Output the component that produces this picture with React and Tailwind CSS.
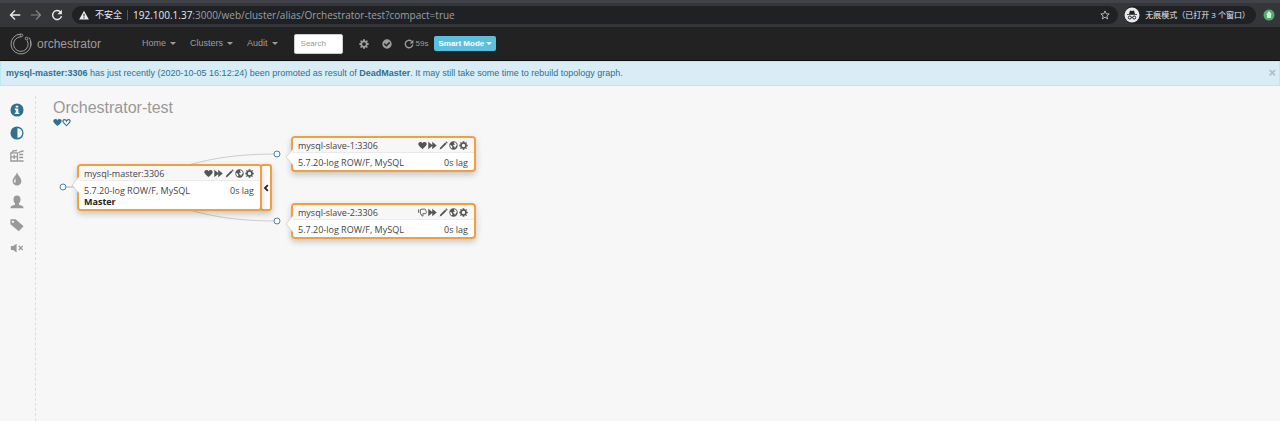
import React from "react";

const PATHS = {
  heart: "M8 14.500 C7 13 0.500 9.500 0.500 5.500 C0.500 3.300 2.300 1.800 4.300 1.800 C6 1.800 7.400 2.700 8 4 C8.600 2.700 10 1.800 11.700 1.800 C13.700 1.800 15.500 3.300 15.500 5.500 C15.500 9.500 9 13 8 14.500Z",
  forward: "M0.500 1.500 L7.500 7 V1.500 L15.500 8 L7.500 14.500 V9 L0.500 14.500Z",
  pencil: "M13 0.500 L15.500 3 L14.200 4.300 L11.700 1.800Z M11 2.500 L13.500 5 L4.500 13.700 L1 15 L2.300 11.500Z",
  gear: "M6.500 0.500 H9.500 L9.900 2.600 L11.100 3.100 L12.900 1.900 L14.300 3.300 L13 5.100 L13.500 6.300 L15.500 6.600 V9.400 L13.500 9.700 L12.900 11 L14.100 12.700 L12.700 14.200 L10.900 13 L9.800 13.500 L9.500 15.500 H6.500 L6.200 13.500 L5 13 L3.300 14.200 L1.800 12.700 L3 10.900 L2.500 9.700 L0.500 9.400 V6.600 L2.500 6.300 L3 5 L1.800 3.300 L3.300 1.800 L5 3 L6.200 2.500Z M8 5 A3 3 0 1 0 8 11 A3 3 0 1 0 8 5Z",
  globe: "M8 0.500 A7.500 7.500 0 1 0 8 15.500 A7.500 7.500 0 1 0 8 0.500Z M9 2 C12 2.300 14 4.800 14 7.500 L12.500 9 L10.800 12.600 L9.300 10 L7.200 8.600 L8.500 6.500 L11 6 L9 4.500Z M2.200 6.500 L4.500 8 L6 10.500 L5.500 13.300 C3 12.300 1.600 9.500 2.200 6.500Z",
  check: "M8 0.500 A7.500 7.500 0 1 0 8 15.500 A7.500 7.500 0 1 0 8 0.500Z M4.500 6.500 L7 9 L11.500 4.500 L13.200 6.200 L7 12.300 L2.900 8.200Z",
  info: "M8 0.500 A7.500 7.500 0 1 0 8 15.500 A7.500 7.500 0 1 0 8 0.500Z M6.500 3 H9.500 V5 H6.500Z M5.500 6.300 H9.500 V11 H10.600 V12.700 H5.400 V11 H6.600 V8 H5.500Z",
  adjust: "M8 0.500 A7.500 7.500 0 1 0 8 15.500 A7.500 7.500 0 1 0 8 0.500Z M8.500 2.500 A5.500 5.500 0 0 1 8.500 13.500Z",
  tint: "M8 0.500 C9 4 13 6.800 13 10.500 A5 5 0 0 1 3 10.500 C3 6.800 7 4 8 0.500Z M6.600 6.800 C5 8.500 4.200 10 4.800 11.500 C5.200 12.700 6.400 12.800 6.500 11.500 C6.500 10 5.800 9 6.600 6.800Z",
  user: "M8 0.500 C10.700 0.500 12 2.300 12 5 C12 7 11.300 8.400 10.200 9.600 C10 10.800 10.500 11.200 12 11.800 C14.400 12.600 15.500 13 15.500 15.200 H0.500 C0.500 13 1.600 12.600 4 11.800 C5.500 11.200 6 10.800 5.800 9.600 C4.700 8.400 4 7 4 5 C4 2.300 5.300 0.500 8 0.500Z",
  tag: "M0.500 1.500 H6.500 L15.500 9.500 L10 15.200 L0.500 7Z M3.400 3 A1.300 1.300 0 1 0 3.400 5.600 A1.300 1.300 0 1 0 3.400 3Z",
  mute: "M1 5.700 H3.500 L7.500 3 V13 L3.500 10.300 H1Z M9.500 6 L10.600 5 L12.300 6.800 L14 5 L15 6 L13.300 7.900 L15 9.800 L14 10.800 L12.300 9 L10.600 10.800 L9.500 9.800 L11.200 7.900Z",
  left: "M10.500 1 L13 3.500 L8.500 8 L13 12.500 L10.500 15 L3.500 8Z",
  warn: "M8 1 L15.800 15 H0.200Z M7.200 6 V10.500 H8.800 V6Z M7.200 11.700 V13.400 H8.800 V11.700Z",
};

function Icon({ name, className }) {
  return (
    <svg viewBox="0 0 16 16" className={className} fill="currentColor" fillRule="evenodd" aria-hidden="true">
      <path d={PATHS[name]} />
    </svg>
  );
}

function LineIcon({ d, width = 1.6, className }) {
  return (
    <svg viewBox="0 0 16 16" className={className} fill="none" stroke="currentColor" strokeWidth={width} aria-hidden="true">
      <path d={d} />
    </svg>
  );
}

const HEART = "M8 13.500 C7 12 1.500 9 1.500 5.500 C1.500 3.800 3 2.800 4.500 2.800 C6.300 2.800 7.500 4 8 5.500 C8.500 4 9.700 2.800 11.500 2.800 C13 2.800 14.500 3.800 14.500 5.500 C14.500 9 9 12 8 13.500Z";
const THUMB_DOWN = "M1 2.500 V8.500 M4 3 V9 L7.500 14.500 C9.500 14.500 9 12.500 8.500 10 H13.500 C15.500 9 15 7.500 14.500 7 C15 5.500 14.500 5 13.800 4.500 C14 3 13 2 12 2 H7 L4 3Z";
const SERVER = "M2.500 4 C2.500 2 4 1.700 8 1.700 M1 4.500 H8.500 V13.700 H1Z M1 9 H8.500 M4.800 6.500 V11.500 M9.500 4 C11.500 4 11.500 2.300 15.500 2.300 M10.500 6.300 H15 M10.500 9.700 H15 M9.500 13.700 H15.500";

function Caret() {
  return <span className="border-x-[3px] border-t-[3px] border-x-transparent border-t-current" />;
}

function BrowserBar() {
  return (
    <div className="flex h-[27px] items-center border-t-[3px] border-[#41424a] bg-[#35363a] pl-[9px] text-[10px] text-[#e8eaed]">
      <div className="flex items-center gap-[9px]">
        <button aria-label="Back"><LineIcon className="size-3" width={1.8} d="M15 8 H2 M8 2 L2 8 L8 14" /></button>
        <button aria-label="Forward" className="text-[#85868a]"><LineIcon className="size-3" width={1.6} d="M1 8 H14 M8 2 L14 8 L8 14" /></button>
        <button aria-label="Reload">
          <svg viewBox="0 0 16 16" className="size-3" fill="none" stroke="currentColor" strokeWidth="1.900" aria-hidden="true">
            <path d="M13 4.500 A6 6 0 1 0 14 9.500" />
            <path d="M14.500 1 V7 H8.500Z" fill="currentColor" stroke="none" />
          </svg>
        </button>
      </div>
      <div className="ml-[9px] flex h-[18px] min-w-0 flex-1 items-center rounded-full bg-[#202124] pr-2 pl-[7px]">
        <Icon name="warn" className="size-[10px] shrink-0" />
        <span className="ml-[6px] shrink-0 text-[9px]">不安全</span>
        <span className="mx-[5px] h-[10px] w-px bg-[#55565a]" />
        <span className="flex-1 truncate text-[#9aa0a6]"><span className="text-[#e8eaed]">192.100.1.37</span>:3000/web/cluster/alias/Orchestrator-test?compact=true</span>
        <button aria-label="Bookmark">
          <LineIcon className="size-[10px] text-[#c5c7ca]" width={1.4} d="M8 1.500 L9.900 6 L14.700 6.300 L11 9.500 L12.200 14.200 L8 11.600 L3.800 14.200 L5 9.500 L1.300 6.300 L6.100 6Z" />
        </button>
      </div>
      <div className="ml-[6px] flex h-[18px] items-center gap-[5px] rounded-full bg-[#202124] pr-[6px] text-[8px]">
        <svg viewBox="0 0 16 16" className="size-4" aria-hidden="true">
          <circle cx="8" cy="8" r="7.500" fill="#e8eaed" />
          <path d="M5 7 L6 3.500 L8 4 L10 3.500 L11 7Z M3 7.200 H13 V8 H3Z" fill="#202124" />
          <g fill="none" stroke="#202124"><circle cx="5.800" cy="10.500" r="1.500" /><circle cx="10.200" cy="10.500" r="1.500" /><path d="M7.300 10.300 H8.700" /></g>
        </svg>
        <span>无痕模式（已打开 3 个窗口）</span>
      </div>
      <svg viewBox="0 0 12 12" className="mr-[5px] ml-[7px] size-3" aria-hidden="true">
        <circle cx="6" cy="6" r="5.500" fill="#4fae6e" />
        <path d="M6 2 L9 5.500 H8 V9 H4 V5.500 H3Z" fill="#d8f0df" />
      </svg>
    </div>
  );
}

function NavBar() {
  return (
    <nav className="flex h-[34px] items-center border-b border-[#101010] bg-[#222] text-[9px] text-[#9d9d9d]">
      <a href="#home" className="ml-[9px] flex w-[133px] items-center gap-1 text-[12px]">
        <svg viewBox="0 0 24 24" className="size-6" fill="none" stroke="#9d9d9d" aria-hidden="true">
          <path d="M12 2 A10 10 0 1 0 21.500 9" />
          <path d="M12 4.800 A7.300 7.300 0 1 0 18.200 8.500" />
          <path d="M20 5.500 C22 8 22.500 12 21.500 15" />
          <circle cx="12.500" cy="3.400" r="1.300" /><circle cx="17.500" cy="6.500" r="1.300" />
        </svg>
        orchestrator
      </a>
      <div className="flex items-center gap-[14px]">
        {["Home", "Clusters", "Audit"].map((label) => (
          <button key={label} className="flex items-center gap-1">{label}<Caret /></button>
        ))}
      </div>
      <input aria-label="Search" placeholder="Search" className="ml-4 h-5 w-[49px] rounded-[2px] border border-[#ccc] bg-white px-[6px] text-[8px] placeholder:text-[#999]" />
      <button aria-label="Settings" className="ml-4"><Icon name="gear" className="size-[10px]" /></button>
      <button aria-label="Status" className="ml-[13px]"><Icon name="check" className="size-[10px]" /></button>
      <button className="ml-[12px] flex items-center gap-[2px] text-[8px]">
        <svg viewBox="0 0 16 16" className="size-[10px]" fill="none" stroke="currentColor" strokeWidth="2.200" aria-hidden="true">
          <path d="M12 3.500 A6 6 0 1 0 14 9" /><path d="M15 1 V7 H9Z" fill="currentColor" stroke="none" />
        </svg>
        59s
      </button>
      <button className="ml-[6px] flex h-[15px] items-center gap-[2px] rounded-[2px] bg-[#5bc0de] px-1 text-[8px] font-bold text-white">Smart Mode<Caret /></button>
    </nav>
  );
}

function Alert() {
  return (
    <div role="alert" className="flex h-[25px] items-center border border-[#bce8f1] bg-[#d9edf7] pr-[3px] pl-[5px] text-[9px] text-[#31708f]">
      <p className="flex-1"><b>mysql-master:3306</b> has just recently (2020-10-05 16:12:24) been promoted as result of <b>DeadMaster</b>. It may still take some time to rebuild topology graph.</p>
      <button aria-label="Close" className="pb-[2px] text-[13px] leading-none font-bold text-[#adbec6]">×</button>
    </div>
  );
}

function Sidebar() {
  const items = ["info", "adjust", "compressed", "tint", "user", "tag", "mute"];
  return (
    <aside className="mt-[10px] flex w-9 shrink-0 flex-col items-center gap-[9px] border-r border-dashed border-[#ddd] pt-[7px] pr-px text-[#999]">
      {items.map((name) => (
        <button key={name} aria-label={name} className={name === "info" || name === "adjust" ? "text-[#31708f]" : ""}>
          {name === "compressed" ? (
            <LineIcon className="size-[14px]" width={1.5} d={SERVER} />
          ) : (
            <Icon name={name} className="size-[14px]" />
          )}
        </button>
      ))}
    </aside>
  );
}

function Node({ title, down, master, className }) {
  return (
    <article className={"absolute flex " + className}>
      <div className="relative w-[185px] rounded-[4px] border-2 border-[#f0a040] bg-white text-[9px] leading-[11px] text-[#444] shadow-[0_3px_6px_rgba(0,0,0,0.2)]">
        <svg viewBox="0 0 8 16" className="absolute top-[11px] -left-2 h-4 w-2" aria-hidden="true">
          <path d="M8 0 L1 8 L8 16Z" fill="#fff" /><path d="M8 0 L1 8 L8 16" fill="none" stroke="#d5d5d5" />
        </svg>
        <header className="flex h-[15px] items-center justify-between rounded-t-[3px] border-b border-[#ebebeb] bg-[#f7f7f7] pr-[6px] pl-[5px]">
          <h2>{title}</h2>
          <div className="flex items-center gap-px text-[#555]">
            {down ? <LineIcon d={THUMB_DOWN} className="size-[9px]" /> : <Icon name="heart" className="size-[9px]" />}
            <Icon name="forward" className="mr-px size-[9px]" />
            {["pencil", "globe", "gear"].map((name) => <Icon key={name} name={name} className="size-[9px]" />)}
          </div>
        </header>
        <div className="pt-1 pr-[6px] pb-[2px] pl-[5px]">
          <p className="flex justify-between"><span>5.7.20-log ROW/F, MySQL</span><span>0s lag</span></p>
          {master && <p className="font-bold text-[#222]">Master</p>}
        </div>
      </div>
      {master && (
        <button aria-label="Collapse" className="-ml-[2px] flex w-3 items-center justify-center rounded-[3px] border-2 border-[#f0a040] bg-white text-[#222] shadow-[0_3px_6px_rgba(0,0,0,0.2)]">
          <Icon name="left" className="size-2 shrink-0" />
        </button>
      )}
    </article>
  );
}

export default function App() {
  return (
    <div className="flex min-h-screen flex-col bg-[#f7f7f7] font-['Liberation_Sans',Arial,sans-serif]">
      <div className="font-['Open_Sans','Noto_Sans_CJK_SC',sans-serif]"><BrowserBar /></div>
      <NavBar />
      <Alert />
      <div className="flex flex-1">
        <Sidebar />
        <main className="relative flex-1 pt-3 pl-[17px]">
          <h1 className="text-[16px] leading-[20px] text-[#999]">Orchestrator-test</h1>
          <div className="flex text-[#31708f]">
            <Icon name="heart" className="size-[9px]" /><LineIcon d={HEART} width={2} className="size-[9px]" />
          </div>
          <svg className="absolute top-0 left-0 h-[160px] w-[300px]" viewBox="0 0 300 160" fill="none" aria-hidden="true">
            <path d="M27 101 C134 101 134 68 241 68 M27 101 C134 101 134 135 241 135" stroke="#ccc" />
            <g fill="#fff" stroke="#4682b4"><circle cx="27" cy="101" r="3" /><circle cx="241" cy="68" r="3" /><circle cx="241" cy="135" r="3" /></g>
          </svg>
          <div className="font-['Open_Sans',sans-serif]">
            <Node title="mysql-master:3306" master className="top-[78px] left-[41px]" />
            <Node title="mysql-slave-1:3306" className="top-[50px] left-[255px]" />
            <Node title="mysql-slave-2:3306" down className="top-[117px] left-[255px]" />
          </div>
        </main>
      </div>
    </div>
  );
}
